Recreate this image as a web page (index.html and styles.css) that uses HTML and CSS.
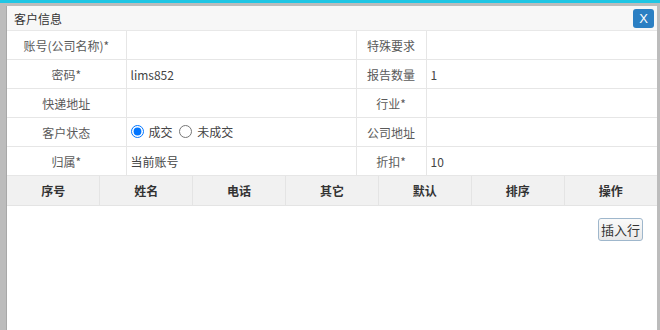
FILE: index.html
```html
<!DOCTYPE html>
<html>
  <head>
    <title>客户信息</title>
    <meta charset="utf-8">
    <link rel="stylesheet" href="styles.css">
  </head>
  <body>
    <div class="topbar"></div>
    <div class="stage">
      <div class="dialog">
        <div class="dialog-head">
          <span class="dialog-title">客户信息</span>
          <button type="button" class="close-btn">X</button>
        </div>
        <table class="form-table">
          <colgroup>
            <col class="c-label1">
            <col class="c-value1">
            <col class="c-label2">
            <col>
          </colgroup>
          <tr>
            <td class="label">账号(公司名称)*</td>
            <td></td>
            <td class="label">特殊要求</td>
            <td></td>
          </tr>
          <tr>
            <td class="label">密码*</td>
            <td>lims852</td>
            <td class="label">报告数量</td>
            <td>1</td>
          </tr>
          <tr>
            <td class="label">快递地址</td>
            <td></td>
            <td class="label">行业*</td>
            <td></td>
          </tr>
          <tr>
            <td class="label">客户状态</td>
            <td>
              <label class="radio"><input type="radio" name="state" checked>成交</label>
              <label class="radio"><input type="radio" name="state">未成交</label>
            </td>
            <td class="label">公司地址</td>
            <td></td>
          </tr>
          <tr>
            <td class="label">归属*</td>
            <td>当前账号</td>
            <td class="label">折扣*</td>
            <td>10</td>
          </tr>
        </table>
        <table class="grid">
          <tr>
            <th>序号</th>
            <th>姓名</th>
            <th>电话</th>
            <th>其它</th>
            <th>默认</th>
            <th>排序</th>
            <th>操作</th>
          </tr>
        </table>
        <div class="actions">
          <button type="button" class="insert-btn">插入行</button>
        </div>
      </div>
    </div>
  </body>
</html>
```

FILE: styles.css
```css
html, body {
  margin: 0;
  height: 100%;
}
body {
  background-color: #bcbcbc;
  font-family: "Noto Sans CJK SC", "Liberation Sans", sans-serif;
  font-size: 12px;
  color: #555;
  overflow: hidden;
}
.topbar {
  height: 3px;
  background-color: #1fc6e4;
}
.stage {
  height: calc(100% - 3px);
  padding: 3px 3px 0 6px;
  box-sizing: border-box;
}
.dialog {
  height: 100%;
  background-color: #fff;
  border-left: 1px solid #a8a8a8;
  box-sizing: border-box;
}
.dialog-head {
  display: flex;
  align-items: center;
  justify-content: space-between;
  height: 24px;
  padding: 0 3px 0 7px;
  background-color: #f7f7f7;
  border-bottom: 1px solid #e8e8e8;
}
.dialog-title {
  color: #333;
  font-size: 12px;
}
.close-btn {
  width: 21px;
  height: 19px;
  padding: 0;
  border: none;
  border-radius: 3px;
  background-color: #2b7fc3;
  color: #fff;
  font-family: "Liberation Sans", sans-serif;
  font-size: 13px;
  line-height: 19px;
}
.form-table {
  width: 100%;
  border-collapse: collapse;
  table-layout: fixed;
}
.c-label1 {
  width: 119px;
}
.c-value1 {
  width: 230px;
}
.c-label2 {
  width: 70px;
}
.form-table td {
  height: 28px;
  padding: 0 4px;
  border: 1px solid #e6e6e6;
  border-top: none;
  color: #444;
}
.form-table td:first-child {
  border-left: none;
}
.form-table td:last-child {
  border-right: none;
}
.form-table td.label {
  text-align: center;
  color: #5a5a5a;
}
.radio {
  display: inline-flex;
  align-items: center;
  margin-right: 4px;
}
.radio input {
  margin: 0 5px 0 0;
  width: 13px;
  height: 13px;
}
.grid {
  width: 100%;
  border-collapse: collapse;
  table-layout: fixed;
}
.grid th {
  height: 27px;
  background-color: #f1f1f1;
  border: 1px solid #e4e4e4;
  border-top: none;
  color: #333;
  font-size: 12px;
  font-weight: bold;
}
.grid th:first-child {
  border-left: none;
}
.grid th:last-child {
  border-right: none;
}
.actions {
  display: flex;
  justify-content: flex-end;
  padding: 12px 14px 0 0;
}
.insert-btn {
  height: 23px;
  padding: 0 2px;
  border: 1px solid #9fb7cc;
  border-radius: 3px;
  background: linear-gradient(#fafafa, #e9e9e9);
  color: #333;
  font-family: "Noto Sans CJK SC", sans-serif;
  font-size: 13px;
}
```
